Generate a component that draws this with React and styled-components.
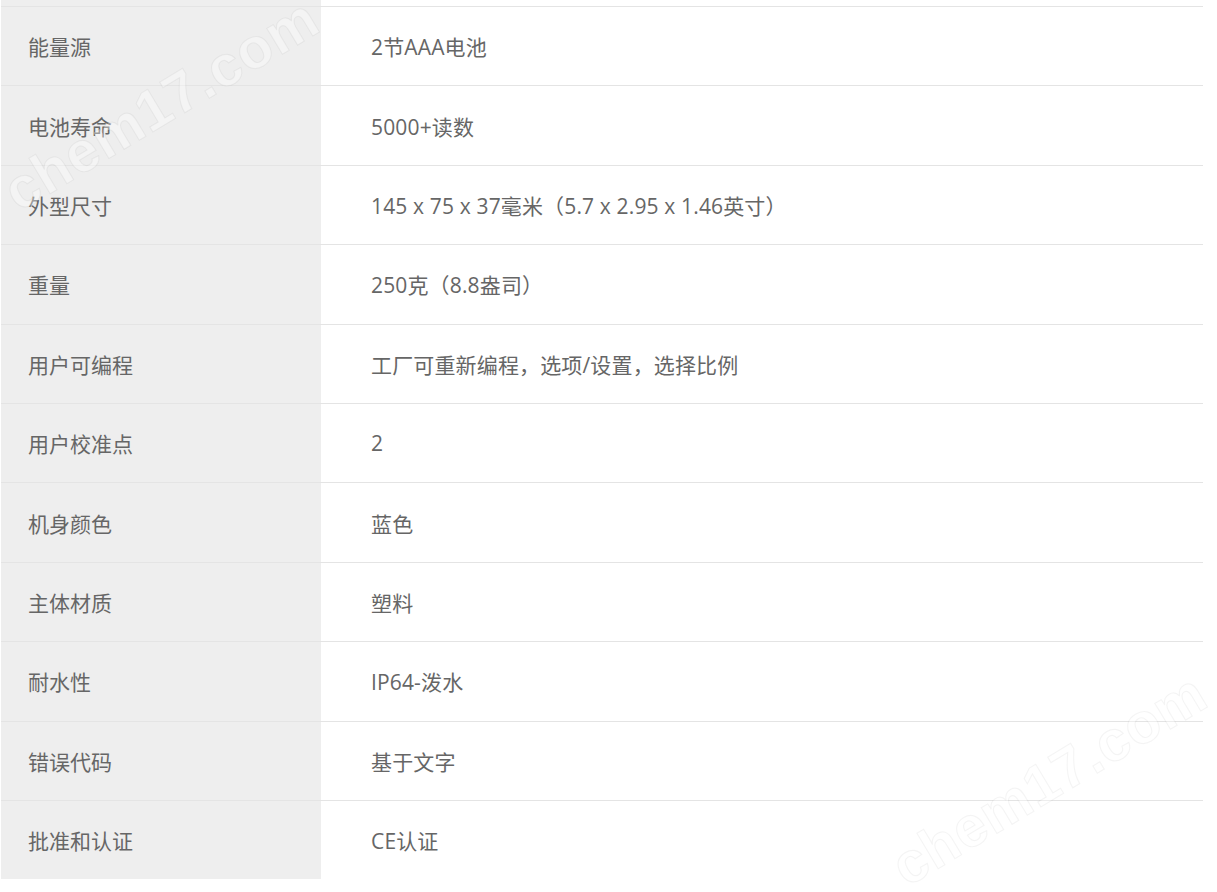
import React from "react";
import styled, { createGlobalStyle } from "styled-components";

const Global = createGlobalStyle`
  html, body { margin: 0; padding: 0; background: #fff; }
  body { font-family: "Open Sans", "Noto Sans CJK SC", sans-serif; overflow: hidden; }
`;

const Page = styled.div`
  position: relative;
  width: 1217px;
  height: 892px;
  overflow: hidden;
`;

const Table = styled.div`
  margin-top: -73.4px;
  margin-left: 1px;
  width: 1202px;
  display: grid;
  grid-template-columns: 320px 1fr;
`;

const Cell = styled.div`
  height: 79.4px;
  box-sizing: border-box;
  border-top: 1px solid ${(p) => (p.$first ? "transparent" : "#e4e4e4")};
  display: flex;
  align-items: center;
  font-size: 21px;
  color: #666;
  white-space: nowrap;
`;

const Label = styled(Cell)`
  background: #eeeeee;
  padding-left: 27px;
`;

const Value = styled(Cell)`
  background: #fff;
  padding-left: 50px;
  letter-spacing: 0.15px;
`;

const Watermark = styled.div`
  position: absolute;
  left: ${(p) => p.$x}px;
  top: ${(p) => p.$y}px;
  transform: rotate(-31deg);
  transform-origin: left top;
  font-family: "Liberation Sans", Arial, sans-serif;
  font-weight: bold;
  font-size: 57px;
  line-height: 1.15;
  color: rgba(255, 255, 255, 0.35);
  -webkit-text-stroke: 1.2px rgba(0, 0, 0, 0.045);
  pointer-events: none;
  white-space: nowrap;
  letter-spacing: 1px;
`;

const rows = [
  ["", ""],
  ["能量源", "2节AAA电池"],
  ["电池寿命", "5000+读数"],
  ["外型尺寸", "145 x 75 x 37毫米（5.7 x 2.95 x 1.46英寸）"],
  ["重量", "250克（8.8盎司）"],
  ["用户可编程", "工厂可重新编程，选项/设置，选择比例"],
  ["用户校准点", "2"],
  ["机身颜色", "蓝色"],
  ["主体材质", "塑料"],
  ["耐水性", "IP64-泼水"],
  ["错误代码", "基于文字"],
  ["批准和认证", "CE认证"],
];

export default function App() {
  return (
    <Page>
      <Global />
      <Table>
        {rows.map(([k, v], i) => (
          <React.Fragment key={i}>
            <Label $first={i === 0}>{k}</Label>
            <Value $first={i === 0}>{v}</Value>
          </React.Fragment>
        ))}
      </Table>
      <Watermark $x={-8} $y={168}>chem17.com</Watermark>
      <Watermark $x={880} $y={843}>chem17.com</Watermark>
    </Page>
  );
}
